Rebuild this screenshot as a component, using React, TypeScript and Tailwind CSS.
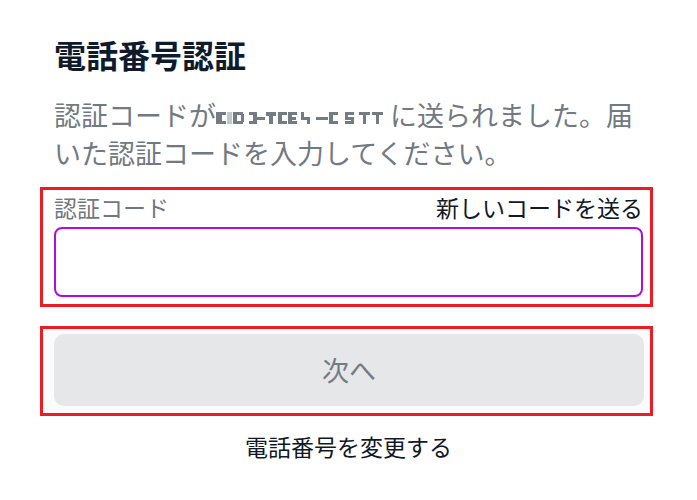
export default function App() {
  return (
    <div
      className="min-h-[500px] w-[697px] bg-white px-[54px] pt-[34px]"
      style={{ fontFamily: '"Noto Sans CJK JP", "Noto Sans", sans-serif' }}
    >
      {/* Title */}
      <h1 className="text-[32px] leading-[40px] font-bold text-[#0f1b2c]">電話番号認証</h1>

      {/* Description */}
      <p className="mt-[22px] text-[27px] leading-[38px] text-[#717983]">
        認証コードが
        <svg width="168" height="14" viewBox="0 0 168 14" className="inline-block align-middle -mt-[4px]">
          <g fill="#737b85">
            <rect x="0" y="2" width="6" height="12" />
            <rect x="6" y="2" width="4" height="3" />
            <rect x="6" y="11" width="4" height="3" />
            <rect x="11" y="2" width="5" height="12" fill="#c4c8cc" />
            <rect x="17" y="2" width="4" height="12" />
            <rect x="21" y="2" width="6" height="3" />
            <rect x="21" y="11" width="6" height="3" />
            <rect x="25" y="4" width="3" height="8" />
            <rect x="33" y="2" width="7" height="3" />
            <rect x="37" y="2" width="4" height="12" />
            <rect x="33" y="11" width="7" height="3" />
            <rect x="41" y="7" width="8" height="3" />
            <rect x="50" y="2" width="10" height="4" />
            <rect x="53" y="2" width="4" height="12" />
            <rect x="62" y="2" width="4" height="12" />
            <rect x="66" y="2" width="5" height="3" />
            <rect x="66" y="11" width="5" height="3" />
            <rect x="72" y="2" width="4" height="12" />
            <rect x="76" y="2" width="5" height="3" />
            <rect x="76" y="7" width="4" height="3" />
            <rect x="76" y="11" width="5" height="3" />
            <rect x="85" y="2" width="3" height="8" />
            <rect x="85" y="7" width="8" height="3" />
            <rect x="91" y="7" width="3" height="7" />
            <rect x="100" y="7" width="12" height="3" />
            <rect x="113" y="2" width="4" height="12" />
            <rect x="117" y="2" width="5" height="3" />
            <rect x="117" y="11" width="5" height="3" />
            <rect x="129" y="2" width="9" height="3" />
            <rect x="129" y="2" width="3" height="6" />
            <rect x="129" y="7" width="9" height="3" />
            <rect x="135" y="7" width="3" height="7" />
            <rect x="129" y="11" width="9" height="3" />
            <rect x="143" y="2" width="11" height="3" />
            <rect x="147" y="2" width="3" height="12" />
            <rect x="156" y="2" width="11" height="3" />
            <rect x="160" y="2" width="3" height="12" />
          </g>
        </svg>
        {' '}に送られました。届いた認証コードを入力してください。
      </p>

      {/* Code field (annotated) */}
      <div className="mt-[15px] -ml-[14px] -mr-[10px] border-[3px] border-[#ec1c24] pl-[11px] pr-[7px] pt-[2px] pb-[7px]">
        <div className="flex items-center justify-between text-[23px] leading-[30px]">
          <span className="text-[#6f7780]">認証コード</span>
          <span className="text-[#111827]">新しいコードを送る</span>
        </div>
        <input
          type="text"
          className="mt-[5px] block h-[70px] w-full rounded-[8px] border-2 border-[#b00ee0] bg-white px-3 outline-none"
        />
      </div>

      {/* Next button (annotated) */}
      <div className="mt-[19px] -ml-[14px] -mr-[10px] border-[3px] border-[#ec1c24] bg-[#fbfbfb] pl-[11px] pr-[6px] pt-[5px] pb-[7px]">
        <button className="flex h-[72px] w-full items-center justify-center rounded-[10px] bg-[#e6e7e9] text-[27px] text-[#737b84]">
          次へ
        </button>
      </div>

      <div className="mt-[15px] text-center text-[23px] leading-[30px] text-[#111827]">電話番号を変更する</div>
    </div>
  )
}
